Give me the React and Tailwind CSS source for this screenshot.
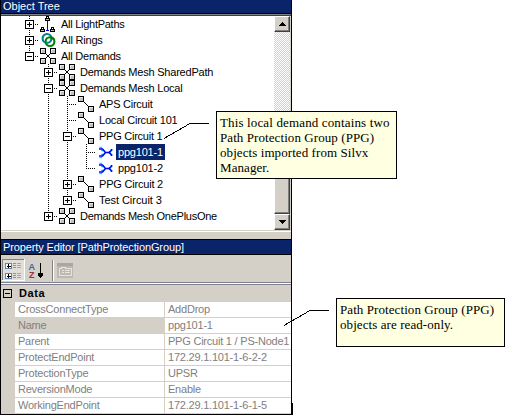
import React from "react";

const DOT = { stroke: "#000", strokeDasharray: "1 1", shapeRendering: "crispEdges" };

// One 19px indent cell of the tree: guide line, connector and expander box
function Cell({ v = "full", h, box }) {
  return (
    <svg width="19" height="16" className="shrink-0">
      {v !== "none" && <line x1="9.5" y1="0" x2="9.5" y2={v === "half" ? 8 : 16} {...DOT} />}
      {h && <line x1="9" y1="8.5" x2="19" y2="8.5" {...DOT} />}
      {box && (
        <g shapeRendering="crispEdges" stroke="#000">
          <rect x="5.5" y="4.5" width="8" height="8" fill="#fff" />
          <path d={box === "+" ? "M7 8.5h5M9.5 6v5" : "M7 8.5h5"} />
        </g>
      )}
    </svg>
  );
}

function Node({ x, y }) {
  return (
    <g>
      <rect x={x + 0.5} y={y + 0.5} width="5" height="5" fill="#c0c0c0" stroke="#000" />
      <path d={`M${x + 1} ${y + 1.5}h4M${x + 1.5} ${y + 1}v4`} stroke="#e8e8e8" fill="none" />
    </g>
  );
}

function Station({ x, y }) {
  return (
    <g>
      <rect x={x + 1.5} y={y + 0.5} width="2" height="2" fill="#fff" stroke="#000" />
      <rect x={x + 0.5} y={y + 2.5} width="4" height="2" fill="#c0c0c0" stroke="#000" />
    </g>
  );
}

function Icon({ kind }) {
  return (
    <svg width="19" height="16" className="shrink-0 overflow-visible" shapeRendering="crispEdges">
      {kind === "mesh" && (
        <g>
          <path d="M6 5l6 6M12 5l-6 6" stroke="#000" />
          <Node x={1} y={0} /><Node x={11} y={0} /><Node x={1} y={10} /><Node x={11} y={10} />
        </g>
      )}
      {kind === "circuit" && (
        <g>
          <path d="M6 5l6 6" stroke="#000" />
          <Node x={1} y={0} /><Node x={11} y={10} />
        </g>
      )}
      {kind === "path" && (
        <g>
          <path d="M8.5 5v9M7 14.5h3" stroke="#0000ff" fill="none" />
          <Station x={6} y={0} /><Station x={1} y={11} /><Station x={11} y={11} />
        </g>
      )}
      {kind === "ring" && (
        <g fill="none" strokeWidth="2.1" shapeRendering="auto">
          <circle cx="11" cy="9.6" r="4.4" stroke="#008000" />
          <circle cx="8" cy="6.4" r="4.4" stroke="#008080" />
          <path d="M11 5.2a4.400 4.400 0 0 1 4 2.600" stroke="#008000" />
        </g>
      )}
      {kind === "ppg" && (
        <g fill="none" shapeRendering="auto">
          <path d="M3.500 3.500h2.500M3.500 13.500h2.500M5 6.500h2M5 10.500h2M13.500 9l2-3M13.500 8l2 3" stroke="#00d0ff" strokeWidth="1.300" />
          <path d="M3 5h3.500l3 3.500H13M3 12h3.500l3-3.500M15.500 5v2M15.500 10v2M13 8.500l2-1.500M13 8.500l2 1.500" stroke="#0000ff" strokeWidth="1.700" />
        </g>
      )}
    </svg>
  );
}

const TREE = [
  ["All LightPaths", "path", [["full", 1, "+"]], "tracking-[-0.27px]"],
  ["All Rings", "ring", [["full", 1, "+"]], "tracking-[-0.2px]"],
  ["All Demands", "mesh", [["half", 1, "-"]], "tracking-[-0.23px]"],
  ["Demands Mesh SharedPath", "mesh", [["none"], ["full", 1, "+"]], "tracking-[-0.22px]"],
  ["Demands Mesh Local", "mesh", [["none"], ["full", 1, "-"]], "tracking-[-0.22px]"],
  ["APS Circuit", "circuit", [["none"], ["full"], ["full", 1]], "tracking-[-0.25px]"],
  ["Local Circuit 101", "circuit", [["none"], ["full"], ["full", 1]], "tracking-[-0.2px]"],
  ["PPG Circuit 1", "circuit", [["none"], ["full"], ["full", 1, "-"]], "tracking-[-0.25px]"],
  ["ppg101-1", "ppg", [["none"], ["full"], ["full"], ["full", 1]], "tracking-[-0.2px]", true],
  ["ppg101-2", "ppg", [["none"], ["full"], ["full"], ["half", 1]], "tracking-[-0.2px]"],
  ["PPG Circuit 2", "circuit", [["none"], ["full"], ["full", 1, "+"]], "tracking-[-0.2px]"],
  ["Test Circuit 3", "circuit", [["none"], ["full"], ["half", 1, "+"]], "tracking-[-0.05px]"],
  ["Demands Mesh OnePlusOne", "mesh", [["none"], ["half", 1, "+"]], "tracking-[-0.27px]"],
];

const PROPS = [
  ["CrossConnectType", "AddDrop"],
  ["Name", "ppg101-1"],
  ["Parent", "PPG Circuit 1 / PS-Node1"],
  ["ProtectEndPoint", "172.29.1.101-1-6-2-2"],
  ["ProtectionType", "UPSR"],
  ["ReversionMode", "Enable"],
  ["WorkingEndPoint", "172.29.1.101-1-6-1-5"],
];

function ScrollButton({ down }) {
  return (
    <div className="flex h-4 w-4 shrink-0 items-center justify-center border border-t-white border-l-white border-r-[#404040] border-b-[#404040] bg-[#d4d0c8] shadow-[inset_-1px_-1px_#808080]">
      <svg width="7" height="4" shapeRendering="crispEdges">
        <path d={down ? "M0 0h7v1H0zM1 1h5v1H1zM2 2h3v1H2zM3 3h1v1H3z" : "M3 0h1v1H3zM2 1h3v1H2zM1 2h5v1H1zM0 3h7v1H0z"} />
      </svg>
    </div>
  );
}

function ObjectTree() {
  return (
    <section className="flex h-[239px] flex-col">
      <h2 className="h-[13px] bg-[#0a246a] pl-[2px] leading-[12px] text-white">Object Tree</h2>
      <div className="h-px bg-black" />
      <div className="h-px bg-[#808080]" />
      <div className="h-px bg-[#404040]" />
      <div className="flex h-[214px]">
        <div className="flex-1 bg-white pl-[19px]">
          {TREE.map(([name, icon, cells, tracking, selected]) => (
            <div key={name} className="flex h-4">
              {cells.map(([v, h, box], i) => <Cell key={i} v={v} h={h} box={box} />)}
              <Icon kind={icon} />
              <span className={`ml-px h-4 whitespace-nowrap pl-[2px] leading-4 ${tracking} ${selected ? "bg-[#0a246a] pr-[2px] text-white" : ""}`}>{name}</span>
            </div>
          ))}
        </div>
        <div className="flex w-4 flex-col bg-[repeating-conic-gradient(#d4d0c8_0_25%,#fff_0_50%)] bg-[length:2px_2px]">
          <ScrollButton />
          <div className="mt-auto h-[60px] border border-t-white border-l-white border-r-[#404040] border-b-[#404040] bg-[#d4d0c8] shadow-[inset_-1px_-1px_#808080]" />
          <ScrollButton down />
        </div>
        <div className="w-px bg-[#d4d0c8]" />
      </div>
      <div className="mt-px h-px bg-white" />
    </section>
  );
}

function Toolbar() {
  return (
    <div className="flex h-[27px] items-center">
      <svg width="76" height="27" shapeRendering="crispEdges">
        <rect x="1" y="4" width="23" height="22" fill="#e2dfd9" />
        <path d="M1 4.500h22M1.500 4v21" stroke="#808080" />
        <path d="M1 25.500h23M23.500 4v22" stroke="#fff" />
        {[8, 18].map((y) => (
          <g key={y}>
            <rect x="4.500" y={y + 0.5} width="6" height="5" fill="#fff" stroke="#5c82b8" />
            <path d={`M6 ${y + 3}h4M7.500 ${y + 1}v4`} stroke="#000" />
            <path d={`M12 ${y + 0.5}h3M12 ${y + 2.5}h3M12 ${y + 4.5}h3`} stroke="#909090" />
            <path d={`M16 ${y + 0.5}h4M16 ${y + 2.5}h4M16 ${y + 4.5}h4`} stroke="#96a6c4" />
          </g>
        ))}
        <text x="27.500" y="15" className="text-[9px] font-bold" fill="#3b67b0">A</text>
        <text x="28" y="23" className="text-[9px] font-bold" fill="#9b3038">Z</text>
        <path d="M39 8h1v15h-1zM37 18h5v1h-5zM37 19h5v2h-5zM38 21h3v1h-3z" />
        <path d="M51.500 5v21" stroke="#808080" />
        <path d="M52.500 5v21" stroke="#fff" />
        <rect x="56" y="8" width="16" height="15" fill="#bcb9b2" />
        <path d="M56 8h16v3H56z" fill="#aaa7a1" />
        <path d="M58.500 13.500h2v-1h4v1h6v7h-12zM61 15.500h2M61 17.500h2M64 15.500h5M64 17.500h5" stroke="#e6e4df" fill="none" />
      </svg>
    </div>
  );
}

function PropertyEditor() {
  return (
    <section className="flex flex-col">
      <div className="h-px bg-black" />
      <h2 className="h-[14px] whitespace-nowrap bg-[#0a246a] pl-[2px] leading-[14px] tracking-[-0.12px] text-white">Property Editor [PathProtectionGroup]</h2>
      <div className="h-px bg-black" />
      <Toolbar />
      <div className="h-px bg-[#808090]" />
      <div className="h-px bg-white" />
      <div className="h-px bg-[#808090]" />
      <div className="flex h-[17px] items-center">
        <svg width="18" height="17" shapeRendering="crispEdges">
          <path d="M2.500 4.500h8v8h-8zM4 8.500h5" fill="none" stroke="#000" />
        </svg>
        <b className="tracking-[0.6px]">Data</b>
      </div>
      {PROPS.map(([name, value]) => (
        <div key={name} className="flex h-4 pb-px pl-[14px] leading-[15px] tracking-[-0.22px] text-[#808080]">
          <div className={`w-[149px] whitespace-nowrap pl-[3px] ${name === "Name" ? "bg-[#d4d0c8]" : "bg-white"}`}>{name}</div>
          <div className="ml-px w-[126px] whitespace-nowrap bg-white pl-[3px]">{value}</div>
        </div>
      ))}
      <div className="h-px bg-black" />
    </section>
  );
}

export default function App() {
  return (
    <main className="relative h-[415px] w-[505px] overflow-hidden bg-white font-['Liberation_Sans',Arial,sans-serif] text-[11px] text-black">
      <div className="h-[415px] w-[292px] border-x border-black bg-[#d4d0c8]">
        <ObjectTree />
        <PropertyEditor />
      </div>
      <svg className="absolute inset-0" width="505" height="415" shapeRendering="crispEdges" fill="none" stroke="#000">
        <path d="M164 138.500L190 123.500H209M284 325.500L310 310.500H329" />
        <path d="M292.500 403v12" />
      </svg>
      <div className="absolute left-[216px] top-[111px] h-[68px] w-[181px] whitespace-nowrap border border-black bg-[#ffffe1] pl-[3px] pt-[3px] font-['Liberation_Serif',serif] text-[13px] leading-[15px] tracking-[0.08px]">
        <p className="tracking-[0.14px]">This local demand contains two</p>
        <p>Path Protection Group (PPG)</p>
        <p>objects imported from Silvx</p>
        <p>Manager.</p>
      </div>
      <div className="absolute left-[336px] top-[298px] h-[49px] w-[169px] whitespace-nowrap border border-black bg-[#ffffe1] pl-[3px] pt-[3px] font-['Liberation_Serif',serif] text-[13px] leading-[15px] tracking-[0.08px]">
        <p>Path Protection Group (PPG)</p>
        <p>objects are read-only.</p>
      </div>
    </main>
  );
}
